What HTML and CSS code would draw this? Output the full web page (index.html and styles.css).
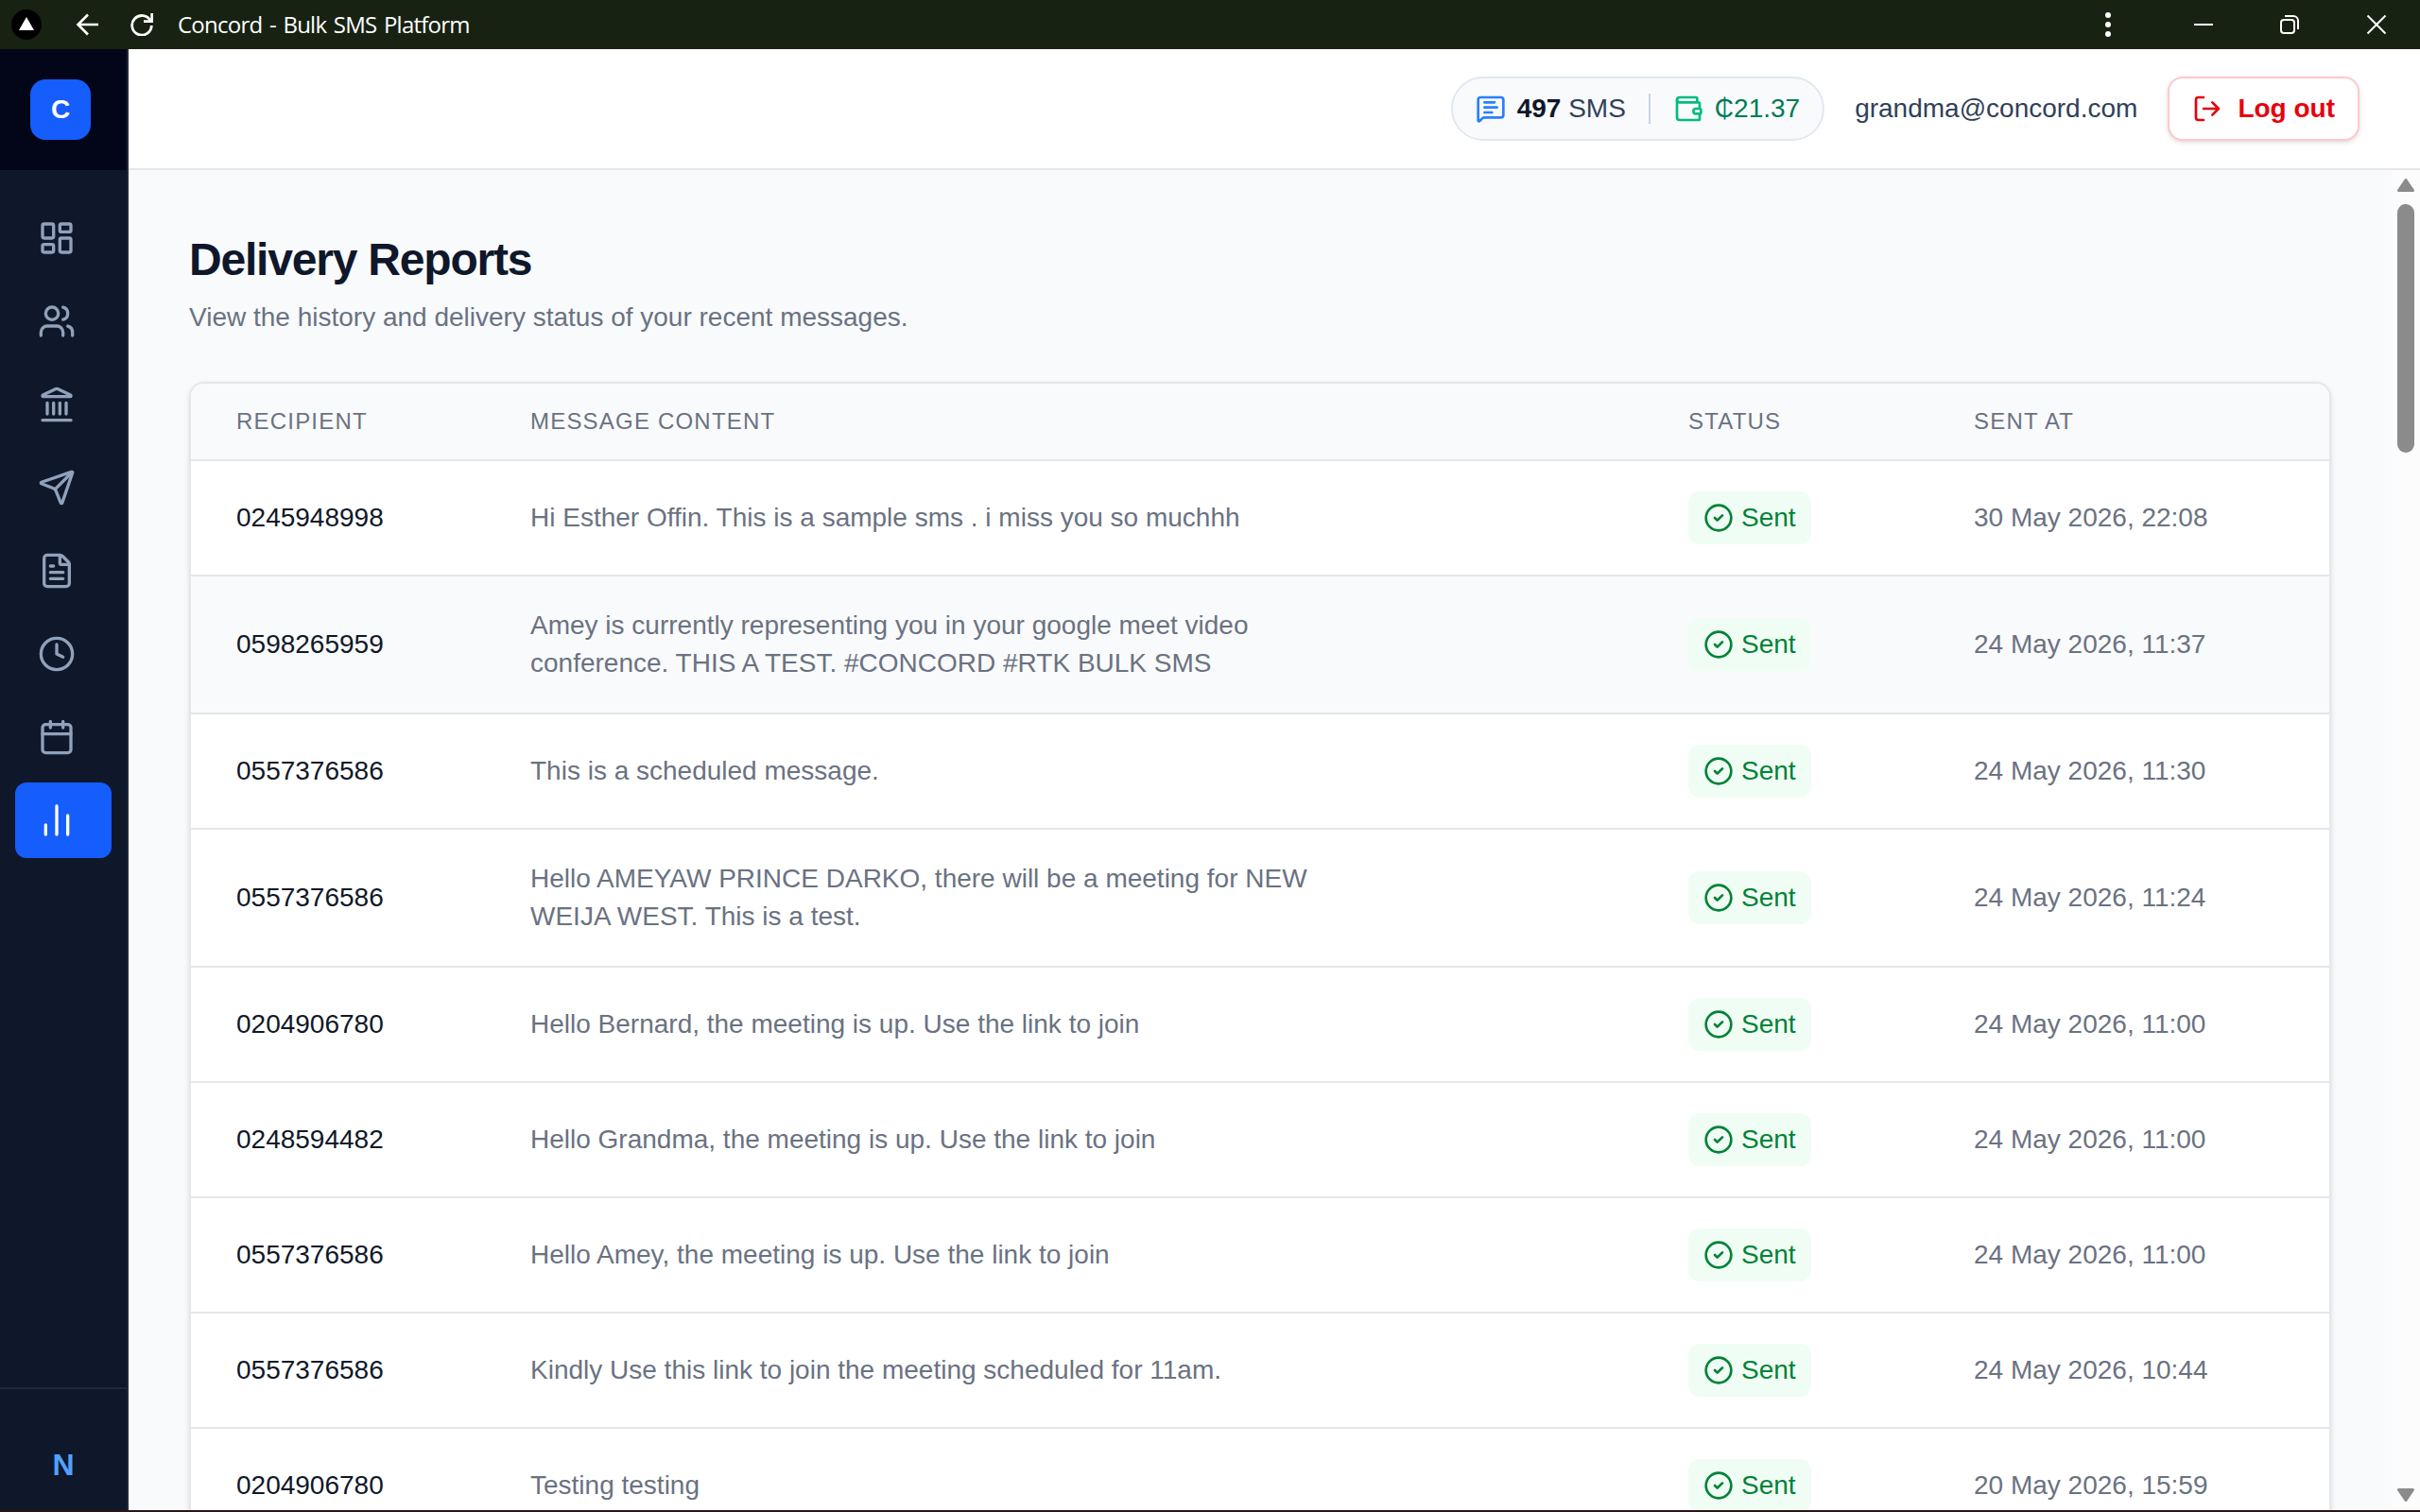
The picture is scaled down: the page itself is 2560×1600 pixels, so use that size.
FILE: index.html
```html
<!DOCTYPE html>
<html lang="en">
<head>
<meta charset="utf-8">
<title>Concord - Bulk SMS Platform</title>
<link rel="stylesheet" href="styles.css">
</head>
<body>
<svg class="sprite" aria-hidden="true">
  <symbol id="circle-check" viewBox="0 0 24 24"><circle cx="12" cy="12" r="10"/><path d="m9 12 2 2 4-4"/></symbol>
</svg>
<div class="window">
  <div class="titlebar">
    <svg class="app-icon" viewBox="0 0 32 32"><circle cx="16" cy="16" r="16" fill="#000"/><path d="M16 8l8 14H8z" fill="#fff"/></svg>
    <svg class="nav-back" viewBox="0 0 24 24"><path d="M13 1.5 2.500 12 13 22.500M2.500 12H24"/></svg>
    <svg class="nav-reload" viewBox="0 0 24 24"><path d="M21.300 8.400A10.300 10.300 0 1 0 22.300 13"/><path d="M22.700 0v8.700H14"/></svg>
    <span class="window-title">Concord - Bulk SMS Platform</span>
    <svg class="dots" viewBox="0 0 6 26"><circle cx="3" cy="3" r="3"/><circle cx="3" cy="13" r="3"/><circle cx="3" cy="23" r="3"/></svg>
    <svg class="control minimize" viewBox="0 0 20 20"><path d="M0 10h20"/></svg>
    <svg class="control restore" viewBox="0 0 20 20"><rect x="1" y="5" width="14" height="14" rx="3"/><path d="M5 1h9a5 5 0 0 1 5 5v9"/></svg>
    <svg class="control" viewBox="0 0 20 20"><path d="M.5.5l19 19M19.500.5l-19 19"/></svg>
  </div>

  <div class="app">
    <aside class="sidebar">
      <div class="brand"><div class="logo">C</div></div>
      <nav class="menu">
        <a class="item"><svg class="icon" viewBox="0 0 24 24"><rect width="7" height="9" x="3" y="3" rx="1"/><rect width="7" height="5" x="14" y="3" rx="1"/><rect width="7" height="9" x="14" y="12" rx="1"/><rect width="7" height="5" x="3" y="16" rx="1"/></svg></a>
        <a class="item"><svg class="icon" viewBox="0 0 24 24"><path d="M16 21v-2a4 4 0 0 0-4-4H6a4 4 0 0 0-4 4v2"/><path d="M16 3.128a4 4 0 0 1 0 7.744"/><path d="M22 21v-2a4 4 0 0 0-3-3.870"/><circle cx="9" cy="7" r="4"/></svg></a>
        <a class="item"><svg class="icon" viewBox="0 0 24 24"><path d="M10 18v-7M14 18v-7M18 18v-7M6 18v-7M3 22h18"/><path d="M11.120 2.198a2 2 0 0 1 1.760.006l7.866 3.847c.476.233.310.949-.220.949H3.474c-.530 0-.695-.716-.220-.949z"/></svg></a>
        <a class="item"><svg class="icon" viewBox="0 0 24 24"><path d="M14.536 21.686a.5.5 0 0 0 .937-.024l6.500-19a.496.496 0 0 0-.635-.635l-19 6.500a.5.5 0 0 0-.024.937l7.930 3.180a2 2 0 0 1 1.112 1.110z"/><path d="m21.854 2.147-10.940 10.939"/></svg></a>
        <a class="item"><svg class="icon" viewBox="0 0 24 24"><path d="M6 22a2 2 0 0 1-2-2V4a2 2 0 0 1 2-2h8a2.400 2.400 0 0 1 1.704.706l3.588 3.588A2.400 2.400 0 0 1 20 8v12a2 2 0 0 1-2 2z"/><path d="M14 2v5a1 1 0 0 0 1 1h5M10 9H8M16 13H8M16 17H8"/></svg></a>
        <a class="item"><svg class="icon" viewBox="0 0 24 24"><circle cx="12" cy="12" r="10"/><path d="M12 6v6l4 2"/></svg></a>
        <a class="item"><svg class="icon" viewBox="0 0 24 24"><path d="M8 2v4M16 2v4M3 10h18"/><rect width="18" height="18" x="3" y="4" rx="2"/></svg></a>
        <a class="item active"><svg class="icon" viewBox="0 0 24 24"><path d="M5 21v-6M12 21V3M19 21V9"/></svg></a>
      </nav>
      <div class="account">N</div>
    </aside>

    <div class="page">
      <header class="topbar">
        <div class="balance">
          <svg class="icon blue" viewBox="0 0 24 24"><path d="M22 17a2 2 0 0 1-2 2H6.828a2 2 0 0 0-1.414.586l-2.202 2.202A.710.710 0 0 1 2 21.286V5a2 2 0 0 1 2-2h16a2 2 0 0 1 2 2z"/><path d="M7 11h10M7 15h6M7 7h8"/></svg>
          <span class="credits"><b>497</b> SMS</span>
          <span class="divider"></span>
          <svg class="icon green" viewBox="0 0 24 24"><path d="M19 7V4a1 1 0 0 0-1-1H5a2 2 0 0 0 0 4h15a1 1 0 0 1 1 1v4h-3a2 2 0 0 0 0 4h3a1 1 0 0 0 1-1v-2a1 1 0 0 0-1-1"/><path d="M3 5v14a2 2 0 0 0 2 2h15a1 1 0 0 0 1-1v-4"/></svg>
          <span class="money">₵21.37</span>
        </div>
        <span class="email">grandma@concord.com</span>
        <button class="logout"><svg class="icon" viewBox="0 0 24 24"><path d="m16 17 5-5-5-5M21 12H9M9 21H5a2 2 0 0 1-2-2V5a2 2 0 0 1 2-2h4"/></svg>Log out</button>
      </header>

      <div class="viewport">
        <main class="content">
          <h1>Delivery Reports</h1>
          <p class="subtitle">View the history and delivery status of your recent messages.</p>
          <div class="table">
            <div class="row head"><span>Recipient</span><span>Message Content</span><span>Status</span><span>Sent At</span></div>
            <div class="row"><span class="phone">0245948998</span><span class="message">Hi Esther Offin. This is a sample sms . i miss you so muchhh</span><span class="badge"><svg class="icon"><use href="#circle-check"/></svg>Sent</span><span>30 May 2026, 22:08</span></div>
            <div class="row hover"><span class="phone">0598265959</span><span class="message">Amey is currently representing you in your google meet video conference. THIS A TEST. #CONCORD #RTK BULK SMS</span><span class="badge"><svg class="icon"><use href="#circle-check"/></svg>Sent</span><span>24 May 2026, 11:37</span></div>
            <div class="row"><span class="phone">0557376586</span><span class="message">This is a scheduled message.</span><span class="badge"><svg class="icon"><use href="#circle-check"/></svg>Sent</span><span>24 May 2026, 11:30</span></div>
            <div class="row"><span class="phone">0557376586</span><span class="message">Hello AMEYAW PRINCE DARKO, there will be a meeting for NEW WEIJA WEST. This is a test.</span><span class="badge"><svg class="icon"><use href="#circle-check"/></svg>Sent</span><span>24 May 2026, 11:24</span></div>
            <div class="row"><span class="phone">0204906780</span><span class="message">Hello Bernard, the meeting is up. Use the link to join</span><span class="badge"><svg class="icon"><use href="#circle-check"/></svg>Sent</span><span>24 May 2026, 11:00</span></div>
            <div class="row"><span class="phone">0248594482</span><span class="message">Hello Grandma, the meeting is up. Use the link to join</span><span class="badge"><svg class="icon"><use href="#circle-check"/></svg>Sent</span><span>24 May 2026, 11:00</span></div>
            <div class="row"><span class="phone">0557376586</span><span class="message">Hello Amey, the meeting is up. Use the link to join</span><span class="badge"><svg class="icon"><use href="#circle-check"/></svg>Sent</span><span>24 May 2026, 11:00</span></div>
            <div class="row"><span class="phone">0557376586</span><span class="message">Kindly Use this link to join the meeting scheduled for 11am.</span><span class="badge"><svg class="icon"><use href="#circle-check"/></svg>Sent</span><span>24 May 2026, 10:44</span></div>
            <div class="row"><span class="phone">0204906780</span><span class="message">Testing testing</span><span class="badge"><svg class="icon"><use href="#circle-check"/></svg>Sent</span><span>20 May 2026, 15:59</span></div>
          </div>
        </main>
        <div class="scrollbar">
          <svg class="arrow" viewBox="0 0 18 14"><path d="M9 1.500 16.500 12.500H1.500z"/></svg>
          <div class="thumb"></div>
          <svg class="arrow down" viewBox="0 0 18 14"><path d="M9 12.500 1.500 1.500h15z"/></svg>
        </div>
      </div>
    </div>
  </div>
</div>
</body>
</html>
```
FILE: styles.css
```css
* { box-sizing: border-box; }

body {
  margin: 0;
  font-family: "Liberation Sans", Arial, sans-serif;
  font-size: 28px;
  line-height: 40px;
  color: #0f172b;
}

.sprite { display: none; }

.icon {
  flex: none;
  width: 32px;
  height: 32px;
  fill: none;
  stroke: currentColor;
  stroke-width: 2;
  stroke-linecap: round;
  stroke-linejoin: round;
}

.window {
  display: flex;
  flex-direction: column;
  width: 2560px;
  height: 1600px;
  overflow: hidden;
  border-bottom: 2px solid #2a1517;
}

/* Window title bar */
.titlebar {
  flex: none;
  display: flex;
  align-items: center;
  height: 52px;
  padding: 0 36px 0 12px;
  background: #182213;
  color: #fff;
  fill: none;
  stroke-width: 2.6;
}
.app-icon { width: 32px; height: 32px; }
.nav-back { width: 24px; height: 24px; margin-left: 36px; stroke: #fff; }
.nav-reload { width: 24px; height: 24px; margin-left: 34px; stroke: #fff; stroke-width: 2.8; }
.window-title {
  margin-left: 26px;
  padding-bottom: 1px;
  font: 24px/32px "Segoe UI", "Open Sans", sans-serif;
  white-space: nowrap;
  letter-spacing: -0.75px;
  word-spacing: 2px;
}
.dots { width: 6px; height: 26px; margin-left: auto; fill: #fff; }
.control { width: 20px; height: 20px; margin-left: 72px; stroke: #fff; stroke-width: 2; overflow: visible; }
.minimize { margin-left: 88px; }
.restore { margin-left: 71px; }

.app { flex: 1; display: flex; min-height: 0; }

/* Sidebar */
.sidebar {
  flex: none;
  display: flex;
  flex-direction: column;
  width: 136px;
  background: #0f172b;
  border-right: 2px solid #1d293d;
}
.brand { flex: none; height: 128px; padding: 32px; background: #020618; }
.logo {
  width: 64px;
  height: 64px;
  border-radius: 16px;
  background: #155dfc;
  color: #fff;
  font-weight: 700;
  line-height: 64px;
  text-align: center;
}
.menu { flex: 1; display: flex; flex-direction: column; gap: 8px; padding: 32px 16px; }
.item {
  display: flex;
  align-items: center;
  height: 80px;
  padding-left: 24px;
  border-radius: 12px;
  color: #90a1b9;
}
.item .icon { width: 40px; height: 40px; }
.active { background: #155dfc; color: #fff; }
.account {
  flex: none;
  height: 130px;
  padding-top: 60px;
  border-top: 2px solid #1d293d;
  color: #51a2ff;
  font-size: 32px;
  font-weight: 700;
  text-align: center;
}

/* Top bar */
.page { flex: 1; display: flex; flex-direction: column; min-width: 0; }
.topbar {
  flex: none;
  display: flex;
  align-items: center;
  justify-content: flex-end;
  gap: 32px;
  height: 128px;
  padding: 0 64px;
  background: #fff;
  border-bottom: 2px solid #e5e7eb;
}
.balance {
  display: flex;
  align-items: center;
  height: 68px;
  padding: 0 24px;
  border: 2px solid #e2e8f0;
  border-radius: 34px;
  background: #f8fafc;
  color: #314158;
}
.credits, .money { margin-left: 12px; }
.credits b { color: #0f172b; }
.divider { width: 2px; height: 32px; margin: 0 24px; background: #cad5e2; }
.blue { color: #2b7fff; }
.green { color: #00bc7d; }
.money { color: #007a55; }
.email { color: #314158; }
.logout {
  display: flex;
  align-items: center;
  gap: 16px;
  height: 68px;
  padding: 0 24px;
  border: 2px solid #ffc9c9;
  border-radius: 16px;
  background: #fff;
  color: #e7000b;
  font: inherit;
  font-weight: 700;
  box-shadow: 0 2px 6px rgba(0, 0, 0, .1), 0 2px 4px -2px rgba(0, 0, 0, .1);
}

/* Report */
.viewport { flex: 1; display: flex; min-height: 0; background: #f9fafb; }
.content { flex: 1; padding: 64px; overflow: hidden; background: #f8fafc; }
h1 { margin: -1px 0 9px; font-size: 48px; line-height: 64px; letter-spacing: -1.2px; }
.subtitle { margin: 0 0 48px; color: #6a7282; }
.table {
  overflow: hidden;
  border: 2px solid #e5e7eb;
  border-radius: 16px;
  background: #fff;
  color: #6a7282;
  box-shadow: 0 2px 6px rgba(0, 0, 0, .1), 0 2px 4px -2px rgba(0, 0, 0, .1);
}
.row {
  display: grid;
  grid-template-columns: 311px 1225px 302px 1fr;
  align-items: center;
  padding: 32px 0 32px 48px;
  border-bottom: 2px solid #e5e7eb;
}
.head {
  padding: 24px 0 24px 48px;
  background: #f9fafb;
  font-size: 24px;
  line-height: 32px;
  letter-spacing: 1.2px;
  text-transform: uppercase;
}
.hover { background: #f9fafb; }
.phone { color: #101828; }
.message { max-width: 896px; }
.badge {
  display: flex;
  align-items: center;
  justify-self: start;
  gap: 8px;
  height: 56px;
  padding: 0 16px;
  border-radius: 12px;
  background: #f0fdf4;
  color: #008236;
}

/* Scrollbar */
.scrollbar {
  flex: none;
  display: flex;
  flex-direction: column;
  align-items: center;
  width: 30px;
  padding: 9px 0;
  background: #fcfcfc;
}
.arrow { width: 18px; height: 14px; fill: #8b8b8b; stroke: #8b8b8b; stroke-width: 3; stroke-linejoin: round; }
.thumb { width: 18px; height: 263px; margin-top: 13px; border-radius: 9px; background: #8b8b8b; }
.down { margin-top: auto; }
```
